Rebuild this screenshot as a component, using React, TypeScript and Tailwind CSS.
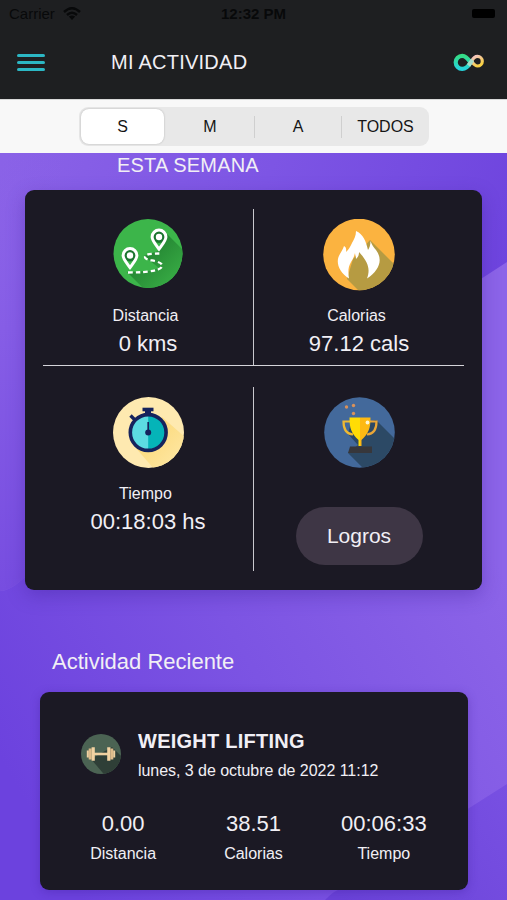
import { ReactNode } from 'react';

function Backdrop() {
  return (
    <svg className="absolute inset-0 w-full h-full" viewBox="0 0 507 747" preserveAspectRatio="none">
      <defs>
        <linearGradient id="band-top" gradientUnits="userSpaceOnUse" x1="0" y1="20" x2="480" y2="190">
          <stop offset="0" stopColor="#8a62e7" />
          <stop offset="0.5" stopColor="#7d55e4" />
          <stop offset="1" stopColor="#6e44de" />
        </linearGradient>
        <linearGradient id="band-left" x1="0" y1="0" x2="0" y2="1">
          <stop offset="0" stopColor="#8d64e8" stopOpacity="0" />
          <stop offset="0.4" stopColor="#865de6" />
          <stop offset="1" stopColor="#774de0" />
        </linearGradient>
        <linearGradient id="band-mid" gradientUnits="userSpaceOnUse" x1="20" y1="640" x2="480" y2="380">
          <stop offset="0" stopColor="#6c42de" />
          <stop offset="0.5" stopColor="#7c54e3" />
          <stop offset="1" stopColor="#8c64e8" />
        </linearGradient>
        <linearGradient id="band-low" gradientUnits="userSpaceOnUse" x1="507" y1="630" x2="340" y2="747">
          <stop offset="0" stopColor="#7850e2" />
          <stop offset="1" stopColor="#6a42d8" />
        </linearGradient>
      </defs>
      <rect width="507" height="747" fill="url(#band-mid)" />
      <path d="M0 0H507V109L30 419Q12 438 0 438Z" fill="url(#band-top)" />
      <path d="M0 0H60V400L30 419Q12 438 0 438Z" fill="url(#band-left)" />
      <path d="M507 631L345 734Q334 737 325 747H507Z" fill="url(#band-low)" />
    </svg>
  );
}

function DistanceIcon() {
  return (
    <svg className="w-[70px] h-[70px]" viewBox="0 0 70 70">
      <defs>
        <clipPath id="distance-clip"><circle cx="35" cy="34.500" r="34.500" /></clipPath>
        <linearGradient id="distance-shade" x1="0" y1="0" x2="1" y2="1">
          <stop offset="0" stopColor="#176d27" />
          <stop offset="0.75" stopColor="#36a843" />
        </linearGradient>
      </defs>
      <circle cx="35" cy="34.500" r="34.500" fill="#3cb54a" />
      <g clipPath="url(#distance-clip)">
        <path d="M52 13L75 36V75H36L14 53L36 52L46 49L31 37L45 32Z" fill="url(#distance-shade)" />
        <circle cx="46" cy="18" r="6" fill="#1c7530" />
        <circle cx="17" cy="36.500" r="6" fill="#1c7530" />
      </g>
      <path d="M46 30C42 24.500 39.100 21.500 39.100 18A6.900 6.900 0 0 1 52.900 18C52.900 21.500 50 24.500 46 30Z" fill="none" stroke="#fff" strokeWidth="3" />
      <path d="M17 48.500C13 43 10.100 40 10.100 36.500A6.900 6.900 0 0 1 23.900 36.500C23.900 40 21 43 17 48.500Z" fill="none" stroke="#fff" strokeWidth="3" />
      <circle cx="46" cy="18" r="3.200" fill="#fff" />
      <circle cx="17" cy="36.500" r="3.200" fill="#fff" />
      <path d="M15 53.500C27 53.500 37 53 45 50.500C51 48.500 50 44.500 45 43C39 41 32 41 32 38C32 35 38 34.500 48 34.500" fill="none" stroke="#fff" strokeWidth="2.300" strokeDasharray="4.500 3" />
    </svg>
  );
}

function CaloriesIcon() {
  return (
    <svg className="w-[72px] h-[72px]" viewBox="0 0 72 72">
      <defs>
        <clipPath id="calories-clip"><circle cx="36" cy="35.500" r="35.800" /></clipPath>
      </defs>
      <circle cx="36" cy="35.500" r="35.800" fill="#fbb340" />
      <g clipPath="url(#calories-clip)">
        <path d="M47 21L78 52V78H42L24 60L30 40Z" fill="#b69b42" />
      </g>
      <path d="M33 12C40 15 43 22 45 31C46.500 29 47.500 26 47.500 22C49 26 50.500 28 53 31C60 40 57 51 44 59.500C48 49 44 42 36 33C36 37 34.500 38.500 33 40C33 37 32 36 32 34C31 38 30 40 28 43C25 48 25 53 26 59.500C17 54 13 45 15.500 38C17 34 20 31 21 27C23 28 23.500 30 23 33C26 30 27 28 29 24C31 20 33 17 33 12Z" fill="#fff" />
    </svg>
  );
}

function TimeIcon() {
  return (
    <svg className="w-[71px] h-[71px]" viewBox="0 0 71 71">
      <defs>
        <clipPath id="time-clip"><circle cx="35.500" cy="35.500" r="35.500" /></clipPath>
        <linearGradient id="time-shade" x1="0" y1="0" x2="1" y2="1">
          <stop offset="0.3" stopColor="#fcdb80" />
          <stop offset="0.85" stopColor="#fee9a9" />
        </linearGradient>
      </defs>
      <circle cx="35.500" cy="35.500" r="35.500" fill="#fee9b0" />
      <g clipPath="url(#time-clip)">
        <path d="M49 20L80 47V80H48L22 50Z" fill="url(#time-shade)" />
      </g>
      <path d="M35 12V18" stroke="#16235d" strokeWidth="6" />
      <path d="M29.500 12.500H40.500" stroke="#16235d" strokeWidth="3.600" />
      <path d="M17.500 18.500L21.500 22.500" stroke="#16235d" strokeWidth="3.400" />
      <circle cx="35.200" cy="35.500" r="17.800" fill="#5cdbe2" />
      <path d="M35.200 17.700A17.800 17.800 0 0 1 35.200 53.300Z" fill="#05b4b8" />
      <circle cx="35.200" cy="35.500" r="17.900" fill="none" stroke="#16235d" strokeWidth="3.600" />
      <path d="M35.200 25V35" stroke="#16235d" strokeWidth="1.700" />
      <circle cx="35.200" cy="35.500" r="3" fill="#16235d" />
    </svg>
  );
}

function TrophyIcon() {
  return (
    <svg className="w-[71px] h-[71px]" viewBox="0 0 71 71">
      <defs>
        <clipPath id="trophy-clip"><circle cx="35.500" cy="35.500" r="35.300" /></clipPath>
      </defs>
      <circle cx="35.500" cy="35.500" r="35.300" fill="#43699b" />
      <g clipPath="url(#trophy-clip)">
        <path d="M52 23L80 51V80H48L24 56L34 48L24 37L26 29Z" fill="#2c4965" />
      </g>
      <path d="M27 24.500H19.500C19.500 32 22 37 29 37.500" fill="none" stroke="#efb932" strokeWidth="2.200" />
      <path d="M45 24.500H52.500C52.500 32 50 37 43 37.500" fill="none" stroke="#e9a638" strokeWidth="2.200" />
      <path d="M25.500 20.500H36V49H34.500V43C27 36 25.500 31 25.500 20.500Z" fill="#ffdc05" />
      <path d="M46.500 20.500H36V49H37.500V43C45 36 46.500 31 46.500 20.500Z" fill="#fdb913" />
      <path d="M26 49.500H48V56H24Z" fill="#37373b" />
      <circle cx="43.500" cy="25.500" r="1.900" fill="#fff6cf" />
      <circle cx="22.500" cy="10" r="1.700" fill="#d9915a" />
      <circle cx="29.500" cy="8.500" r="1.700" fill="#d9915a" />
      <circle cx="29.500" cy="16.500" r="1.700" fill="#d9915a" />
    </svg>
  );
}

function DumbbellIcon() {
  return (
    <svg className="w-10 h-10" viewBox="0 0 40 40">
      <defs>
        <clipPath id="dumbbell-clip"><circle cx="20" cy="20" r="20" /></clipPath>
      </defs>
      <circle cx="20" cy="20" r="20" fill="#4b6353" />
      <g clipPath="url(#dumbbell-clip)">
        <path d="M31 13L45 27V45H27L10 25Z" fill="#2f3f37" />
      </g>
      <path d="M13 20H27" stroke="#efd0a0" strokeWidth="2.600" />
      <path d="M12.200 13.200V26.800M27.800 13.200V26.800" stroke="#f2d2a2" strokeWidth="3.200" />
      <path d="M9.200 14.500V25.500M30.800 14.500V25.500" stroke="#dfbc8b" strokeWidth="3" />
      <path d="M6.800 16.500V23.500M33.200 16.500V23.500" stroke="#efd0a0" strokeWidth="2" />
    </svg>
  );
}

function InfinityLogo() {
  return (
    <svg className="w-[32px] h-[20px]" viewBox="0 0 32 20">
      <defs>
        <linearGradient id="logo-left" x1="0" y1="0" x2="0" y2="1">
          <stop offset="0" stopColor="#35dc86" />
          <stop offset="1" stopColor="#25d3db" />
        </linearGradient>
        <linearGradient id="logo-right" x1="0" y1="0" x2="0.6" y2="1">
          <stop offset="0" stopColor="#f3c2cc" />
          <stop offset="1" stopColor="#f8d043" />
        </linearGradient>
      </defs>
      <path d="M17.500 10.500C15 15 13 16.800 9.200 16.800A6.500 6.500 0 0 1 9.200 3.800C13 3.800 15 6.500 17.500 10.500Z" fill="none" stroke="url(#logo-left)" strokeWidth="4.200" />
      <path d="M18.500 9.500C20 6.500 21.500 4.400 24.500 4.400A4.800 4.800 0 0 1 24.500 14C22 14 20.500 12 18.500 9.500Z" fill="none" stroke="url(#logo-right)" strokeWidth="3.200" />
      <path d="M15.500 13.500L19.500 8" stroke="#a9dcc9" strokeWidth="4" />
    </svg>
  );
}

function Metric({ icon, label, value }: { icon: ReactNode; label: string; value: string }) {
  return (
    <div className="flex flex-1 flex-col items-center pt-[10px]">
      <div className="h-[85px]">{icon}</div>
      <p className="pr-[5px] text-base leading-6">{label}</p>
      <p className="text-[22px] leading-8">{value}</p>
    </div>
  );
}

const stats = [
  { value: '0.00', label: 'Distancia' },
  { value: '38.51', label: 'Calorias' },
  { value: '00:06:33', label: 'Tiempo' },
];

export default function App() {
  return (
    <div className="flex h-[900px] w-full flex-col overflow-hidden bg-[#1e1f21] font-['Liberation_Sans',sans-serif] text-[#f1eff5]">
      <div className="grid h-7 grid-cols-3 items-center px-[9px] text-[15px] text-[#08090a]">
        <div className="flex items-center gap-2">
          <span>Carrier</span>
          <svg className="mb-[2px] h-[13px] w-[18px]" viewBox="0 0 18 13">
            <path d="M1 5Q9 -2.500 17 5M4 8Q9 3.500 14 8" fill="none" stroke="currentColor" strokeWidth="2.400" />
            <path d="M9 13L5.800 9.600Q9 7.200 12.200 9.600Z" fill="currentColor" />
          </svg>
        </div>
        <span className="text-center font-bold">12:32 PM</span>
        <div className="flex justify-end pr-[3px]">
          <div className="mb-[2px] h-[9px] w-[23px] rounded-[2px] bg-black" />
        </div>
      </div>

      <header className="flex h-[71px] shrink-0 items-center px-[17px] pb-[3px]">
        <button type="button" className="mt-px flex w-7 flex-col gap-[4.5px]" aria-label="Menu">
          <span className="h-[2.5px] rounded-full bg-[#2cb7c4]" />
          <span className="h-[2.5px] rounded-full bg-[#2cb7c4]" />
          <span className="h-[2.5px] rounded-full bg-[#2cb7c4]" />
        </button>
        <h1 className="ml-[66px] flex-1 text-xl tracking-[0.25px]">MI ACTIVIDAD</h1>
        <div className="mr-[5px]">
          <InfinityLogo />
        </div>
      </header>

      <nav className="flex h-[54px] shrink-0 items-center justify-center border-t border-[#d8d8d8] bg-[#f8f8f8] text-[#151515]">
        <div className="flex h-[39px] w-[350px] items-center rounded-[9px] bg-[#e8e8e8] p-[2px]">
          <button type="button" className="h-[35px] w-[83px] rounded-[8px] bg-white pl-px shadow-[0_0_2px_rgba(0,0,0,0.25)]">S</button>
          <button type="button" className="h-[22px] w-[91px] border-r border-[#cfcfcf] pl-[3px] leading-none">M</button>
          <button type="button" className="h-[22px] w-[87px] border-r border-[#cfcfcf] pl-px leading-none">A</button>
          <button type="button" className="h-[22px] w-[85px] pl-[3px] leading-none">TODOS</button>
        </div>
      </nav>

      <main className="relative flex-1">
        <Backdrop />
        <div className="relative">
          <h2 className="pl-[117px] text-xl leading-6 tracking-[0.2px]">ESTA SEMANA</h2>

          <section className="ml-[25px] mt-[13px] h-[400px] w-[457px] rounded-[9px] bg-[#1b1924] px-[18px] pt-[19px] shadow-[0_6px_18px_rgba(60,30,150,0.35)]">
            <div className="flex h-[156px]">
              <Metric icon={<DistanceIcon />} label="Distancia" value="0 kms" />
              <div className="w-px bg-[#c9c8ce]" />
              <Metric icon={<CaloriesIcon />} label="Calorias" value="97.12 cals" />
            </div>
            <div className="h-px bg-[#d5d4da]" />
            <div className="mt-[21px] flex h-[184px]">
              <Metric icon={<TimeIcon />} label="Tiempo" value="00:18:03 hs" />
              <div className="w-px bg-[#c9c8ce]" />
              <div className="flex flex-1 flex-col items-center pt-[10px]">
                <TrophyIcon />
                <button type="button" className="mt-[39px] h-[58px] w-[127px] rounded-full bg-[#3e3645] text-[21px]">
                  Logros
                </button>
              </div>
            </div>
          </section>

          <h2 className="mt-[56px] pl-[52px] text-[22px] leading-8">Actividad Reciente</h2>

          <section className="ml-10 mt-[14px] h-[198px] w-[428px] rounded-[9px] bg-[#1b1924] px-[18px] pt-[35px] shadow-[0_2px_10px_rgba(60,30,150,0.35)]">
            <div className="flex pl-[23px]">
              <div className="mt-[7px]">
                <DumbbellIcon />
              </div>
              <div className="ml-[17px]">
                <h3 className="text-xl leading-7 font-bold tracking-[0.25px]">WEIGHT LIFTING</h3>
                <p className="mt-1 text-base leading-6 tracking-[-0.04px]">lunes, 3 de octubre de 2022 11:12</p>
              </div>
            </div>
            <div className="mt-[25px] grid w-[391px] grid-cols-3 text-center">
              {stats.map((stat) => (
                <div key={stat.label}>
                  <p className="text-[22px] leading-8">{stat.value}</p>
                  <p className="mt-[2px] text-base leading-6">{stat.label}</p>
                </div>
              ))}
            </div>
          </section>
        </div>
      </main>
    </div>
  );
}
